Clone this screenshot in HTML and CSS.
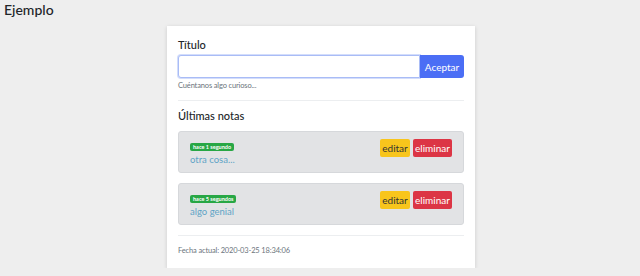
FILE: index.html
```html
<!DOCTYPE html>
<html lang="es">
<head>
    <meta charset="UTF-8">
    <title>Ejemplo</title>
    <link rel="stylesheet" href="styles.css">
</head>
<body>
    <h1 class="page-title">Ejemplo</h1>

    <div class="card">
        <!-- Nueva nota -->
        <label class="field-label" for="titulo">Título</label>
        <div class="input-group">
            <input type="text" id="titulo" class="input">
            <button class="btn btn-primary">Aceptar</button>
        </div>
        <small class="hint">Cuéntanos algo curioso...</small>

        <hr class="divider">

        <h2 class="section-title">Últimas notas</h2>

        <div class="note">
            <div class="note-body">
                <span class="badge">hace 1 segundo</span>
                <div class="note-text">otra cosa...</div>
            </div>
            <div class="note-actions">
                <button class="btn btn-warning">editar</button>
                <button class="btn btn-danger">eliminar</button>
            </div>
        </div>

        <div class="note">
            <div class="note-body">
                <span class="badge">hace 5 segundos</span>
                <div class="note-text">algo genial</div>
            </div>
            <div class="note-actions">
                <button class="btn btn-warning">editar</button>
                <button class="btn btn-danger">eliminar</button>
            </div>
        </div>

        <hr class="divider divider-bottom">

        <p class="date">Fecha actual: 2020-03-25 18:34:06</p>
    </div>
</body>
</html>
```

FILE: styles.css
```css
/* Global */
body {
    font-family: Lato, "Open Sans", sans-serif;
    margin: 0;
    padding: 0;
    background: #eeeeee;
    color: #212529;
}

.page-title {
    font-size: 14px;
    font-weight: 500;
    margin: 0;
    padding: 1px 4px 0;
    line-height: 18px;
}

.card {
    width: 286px;
    margin: 7px auto 0;
    transform: translateX(1px);
    background: #fff;
    padding: 12px 11px 12px;
    box-shadow: 0 1px 4px rgba(0, 0, 0, 0.15);
}

.field-label {
    display: block;
    font-size: 11px;
    font-weight: 500;
    line-height: 14px;
    margin-bottom: 3px;
}

.input-group {
    display: flex;
}

.input {
    flex: 1;
    height: 23px;
    box-sizing: border-box;
    border: 1px solid #a9bcf6;
    border-radius: 3px 0 0 3px;
    box-shadow: 0 0 0 1px #d3ddfb;
    outline: none;
    font-family: inherit;
}

.btn {
    font-family: inherit;
    border: none;
    border-radius: 2px;
    cursor: pointer;
    font-size: 10px;
    padding: 0 4px;
    line-height: 18px;
}

.btn-primary {
    background: #4b6ef5;
    color: #fff;
    border-radius: 0 3px 3px 0;
    width: 44px;
    height: 23px;
    font-size: 10px;
}

.hint {
    display: block;
    font-size: 7.5px;
    letter-spacing: -0.15px;
    color: #6c757d;
    margin-top: 3px;
    line-height: 10px;
}

.divider {
    border: 0;
    border-top: 1px solid #eceef0;
    margin: 9px 0 8px;
}

.section-title {
    font-size: 11px;
    font-weight: 500;
    margin: 0 0 8px;
    line-height: 14px;
}

/* Notes */
.note {
    display: flex;
    justify-content: space-between;
    background: #e2e3e5;
    border: 1px solid #d6d8db;
    border-radius: 3px;
    padding: 7px 11px 7px 11px;
    margin-bottom: 10px;
    height: 42px;
    box-sizing: border-box;
}

.note-body {
    display: flex;
    flex-direction: column;
    align-items: flex-start;
}

.badge {
    display: block;
    background: #28a745;
    color: #fff;
    font-size: 5.5px;
    font-weight: 700;
    line-height: 8px;
    padding: 0 3px;
    border-radius: 2px;
    margin-top: 4px;
}

.note-text {
    font-size: 9.5px;
    color: #5fa3c6;
    line-height: 12px;
    margin-top: 3px;
}

.note-actions {
    display: flex;
    gap: 3px;
    align-items: flex-start;
}

.btn-warning {
    background: #f8c51c;
    color: #333;
    width: 30px;
    padding: 0;
}

.btn-danger {
    background: #dc3545;
    color: #fff;
    width: 39px;
    padding: 0;
}

.divider-bottom {
    margin: 0 0 10px;
}

.date {
    font-size: 7.5px;
    letter-spacing: -0.15px;
    color: #6c757d;
    margin: 0;
    line-height: 10px;
}
```
